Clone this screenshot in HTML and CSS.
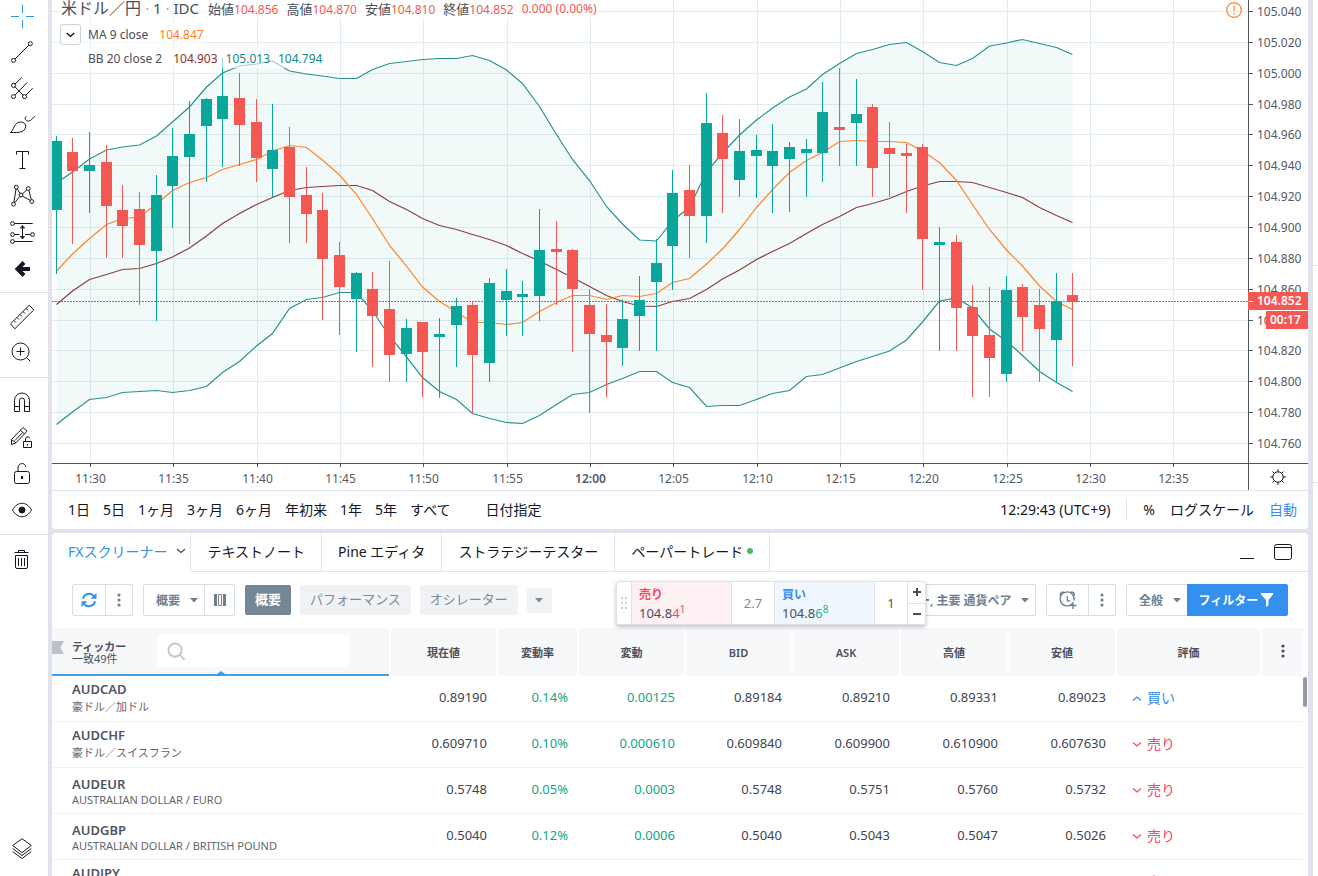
FILE: index.html
```
<!DOCTYPE html>
<html lang="ja">
<head>
<meta charset="utf-8">
<title>米ドル／円 チャート</title>
<link rel="stylesheet" href="styles.css">
</head>
<body>
<div class="app">
  <nav class="tools" aria-label="描画ツール">
    <button class="tool tool-active" aria-label="十字カーソル"><svg viewBox="0 0 28 28"><path d="M14.5 3v8M14.5 18v8M3 14.5h8M18 14.5h8"/></svg></button>
    <button class="tool" aria-label="トレンドライン"><svg viewBox="0 0 28 28"><circle cx="22.3" cy="5.7" r="2"/><circle cx="5.5" cy="22.4" r="2"/><path d="M7 21 20.8 7.2"/></svg></button>
    <button class="tool" aria-label="ピッチフォーク"><svg viewBox="0 0 28 28"><circle cx="5.5" cy="11.4" r="2"/><circle cx="5.5" cy="22.6" r="2"/><circle cx="16.5" cy="22.6" r="2"/><path d="M7 10l7-6.7M7 21.1 19.3 8.3M18 21.1l6.7-7M7 12.9l8 8.2"/></svg></button>
    <button class="tool" aria-label="ブラシ"><svg viewBox="0 0 28 28"><path d="M2.4 22.5C6 20 5.500 14.500 10.200 12.400c3.200-1 6.500 0 7.400 2.500.8 3-.8 5.200-3.600 6.600-3.500 1.500-7.500 1-11.600 1zM18.300 6.400c-2.300 1.800-.8 5 2 4.700C23.500 10.900 24.500 8 27 6.300"/></svg></button>
    <button class="tool" aria-label="テキスト"><svg viewBox="0 0 28 28"><path d="M8.500 8.500v-3h12v3M14.500 5.500v17M11.500 22.500h6"/></svg></button>
    <button class="tool" aria-label="パターン"><svg viewBox="0 0 28 28"><circle cx="5.500" cy="22.200" r="1.900"/><circle cx="8.300" cy="5.200" r="1.900"/><circle cx="13" cy="13" r="1.900"/><circle cx="20.300" cy="6.500" r="1.900"/><circle cx="23.800" cy="19.500" r="1.900"/><path d="M5.900 20.300 8 7.100M9.300 6.900l2.600 4.500M14.500 11.800l4.400-4M20.900 8.400l2.400 9.200M6.800 20.700l5-6.200M14.500 14.200l7.800 4.200"/></svg></button>
    <button class="tool" aria-label="予測"><svg viewBox="0 0 28 28"><circle cx="4.500" cy="5.500" r="1.900"/><circle cx="4.500" cy="16.500" r="1.900"/><circle cx="24.500" cy="16.500" r="1.900"/><circle cx="4.500" cy="23.500" r="1.900"/><path d="M6.500 5.500h18.200M6.500 16.500h5M17 16.500h5.500M6.500 23.500h18.200M14.500 8v12.500M12.500 10l2-2.500 2 2.500zM12.500 18.500l2 2.500 2-2.500z"/></svg></button>
    <button class="tool" aria-label="矢印"><svg class="heavy" viewBox="0 0 28 28"><path d="M16 8.500 9.500 15 16 21.500M10 15h12"/></svg></button>
    <hr class="tool-sep">
    <button class="tool" aria-label="ものさし"><svg viewBox="0 0 28 28"><path d="M2.500 20.800 21.300 2.200l4.500 4.700L6.800 25.800zM6 17.500l2 2M9 14.500l2 2M12 11.500l2 2M15 8.500l2 2M18 5.500l2 2"/></svg></button>
    <button class="tool" aria-label="ズームイン"><svg viewBox="0 0 28 28"><circle cx="12.500" cy="12.500" r="8.500"/><path d="M12.500 8.500v8M8.500 12.500h8M18.500 18.500l3.800 3.800"/></svg></button>
    <hr class="tool-sep">
    <button class="tool" aria-label="マグネット"><svg viewBox="0 0 28 28"><path d="M6.500 23.500v-11a7.500 7.500 0 0 1 15 0v11h-5v-11a2.500 2.500 0 0 0-5 0v11zM6.500 18.500h5M16.500 18.500h5"/></svg></button>
    <button class="tool" aria-label="描画モードを維持"><svg viewBox="0 0 28 28"><path d="M3.500 20.500v-5L15 3.500l4 3.700L8 18.800l-4.500 1.700M3.500 15.500l4.500 3.300M12.300 6.200l4.200 3.800M7 16.500l7.500-8M15.500 17.500h8v6h-8zM17.500 17.500v-2.700a2.200 2.200 0 0 1 4.300-.5M19.500 20v1.500"/></svg></button>
    <button class="tool" aria-label="ロック"><svg viewBox="0 0 28 28"><rect x="6.500" y="11.500" width="15" height="12" rx="2"/><path d="M10 11.500V8c0-5.500 7.200-6 7.800-1"/><path d="M14 16v3" stroke-width="2"/></svg></button>
    <button class="tool" aria-label="表示切替"><svg viewBox="0 0 28 28"><path d="M4.500 14c5-9 14-9 19 0-5 9-14 9-19 0z"/><circle cx="14" cy="14" r="3" fill="currentColor"/></svg></button>
    <hr class="tool-sep">
    <button class="tool" aria-label="削除"><svg viewBox="0 0 28 28"><path d="M6.500 7.500h14M10.500 7V5.500h6V7M7.500 10.500h12V22a1.500 1.500 0 0 1-1.500 1.500H9A1.500 1.500 0 0 1 7.500 22zM10.500 13v8M13.500 13v8M16.500 13v8"/></svg></button>
    <button class="tool tool-last" aria-label="オブジェクトツリー"><svg viewBox="0 0 28 28"><path d="M14 3.700 23.300 10.500 14 17.700 4.700 10.500zM4.700 13.500l9.300 7 9.300-7M4.700 16.500l9.300 7 9.300-7"/></svg></button>
  </nav>

  <main class="center">
    <section class="card chart-card" aria-label="チャート">
      <div class="chart">
        <div class="plot">
          <svg id="plot" class="plot-svg" aria-hidden="true"></svg>
          <div class="legend">
            <div class="legend-main">
              <h1 class="symbol">米ドル／円 <span class="symbol-latin"><i>·</i> 1 <i>·</i> IDC</span></h1>
              <span class="ohlc">始値<b>104.856</b></span>
              <span class="ohlc">高値<b>104.870</b></span>
              <span class="ohlc">安値<b>104.810</b></span>
              <span class="ohlc">終値<b>104.852</b></span>
              <span class="ohlc"><b>0.000 (0.00%)</b></span>
            </div>
            <div class="study">
              <button class="collapse" aria-label="折りたたむ"><svg viewBox="0 0 20 20"><path d="M6 8.500l4 3.500 4-3.500"/></svg></button>
              <span class="study-name">MA 9 close</span><span class="study-value orange">104.847</span>
            </div>
            <div class="study">
              <span class="collapse-space"></span>
              <span class="study-name">BB 20 close 2</span><span class="study-value maroon">104.903</span><span class="study-value teal">105.013</span><span class="study-value teal">104.794</span>
            </div>
          </div>
          <svg class="notice" viewBox="0 0 18 18" aria-label="通知"><circle cx="9" cy="9" r="7.300"/><path d="M9 4.800v5.200M9 11.800v1.600"/></svg>
        </div>
        <div class="price-axis">
          <svg id="prices" class="axis-svg"></svg>
          <span class="price-tag">104.852</span>
          <span class="countdown">00:17</span>
        </div>
        <div class="time-axis"><svg id="times" class="axis-svg"></svg></div>
        <button class="axis-settings" aria-label="スケール設定"><svg viewBox="0 0 18 18"><circle cx="9" cy="9" r="5.200"/><path d="M9 1.200v2.600M9 14.200v2.600M1.200 9h2.600M14.200 9h2.600M3.500 3.500l1.800 1.800M12.700 12.700l1.800 1.800M14.500 3.500l-1.800 1.800M5.300 12.700l-1.800 1.800"/></svg></button>
      </div>
      <div class="ranges">
        <button>1日</button><button>5日</button><button>1ヶ月</button><button>3ヶ月</button><button>6ヶ月</button><button>年初来</button><button>1年</button><button>5年</button><button>すべて</button>
        <button class="goto">日付指定</button>
        <button class="clock">12:29:43 (UTC+9)</button>
        <button class="percent">%</button><button class="scale">ログスケール</button><button class="scale blue">自動</button>
      </div>
    </section>

    <section class="card panel" aria-label="FXスクリーナー">
      <div class="tabs">
        <button class="tab tab-on">FXスクリーナー<svg class="tab-chevron" viewBox="0 0 10 6"><path d="M1 1l4 3.500L9 1"/></svg></button>
        <button class="tab">テキストノート</button>
        <button class="tab">Pine エディタ</button>
        <button class="tab">ストラテジーテスター</button>
        <button class="tab">ペーパートレード<span class="dot"></span></button>
        <div class="tabs-end">
          <button class="window-btn" aria-label="最小化"><svg viewBox="0 0 20 18"><path d="M3 15.500h14"/></svg></button>
          <button class="window-btn" aria-label="最大化"><svg viewBox="0 0 20 18"><rect x="1.500" y="1.500" width="17" height="15" rx="2"/><path d="M1.500 4.500h17"/></svg></button>
        </div>
      </div>

      <div class="filters">
        <div class="group">
          <button class="g-btn refresh" aria-label="更新"><svg viewBox="0 0 16 16"><path d="M2 6.700A6.200 6.200 0 0 1 13 4.200M14 9.300A6.200 6.200 0 0 1 3 11.800"/><path class="solid" d="M15.500 1v5.800H9.700zM.500 15V9.200h5.800z"/></svg></button>
          <button class="g-btn kebab" aria-label="メニュー"><svg viewBox="0 0 4 14"><circle cx="2" cy="2" r="1.600"/><circle cx="2" cy="7" r="1.600"/><circle cx="2" cy="12" r="1.600"/></svg></button>
        </div>
        <div class="group">
          <div class="pick pick-view"><select aria-label="列の組"><option>概要</option></select><svg class="caret" viewBox="0 0 8 5"><path d="M0 0h8L4 4.500z"/></svg></div>
          <button class="g-btn columns" aria-label="列"><svg viewBox="0 0 12 14"><path d="M0 1h3v12H0zM9 1h3v12H9z"/><path class="open" d="M4.500 1.500h3v11h-3z"/></svg></button>
        </div>
        <button class="chip chip-on">概要</button>
        <button class="chip">パフォーマンス</button>
        <button class="chip">オシレーター</button>
        <button class="chip chip-small" aria-label="その他"><svg class="caret" viewBox="0 0 8 5"><path d="M0 0h8L4 4.500z"/></svg></button>
        <div class="group push">
          <div class="pick pick-pairs"><select aria-label="通貨ペア"><option>ー, 主要 通貨ペア</option></select><svg class="caret" viewBox="0 0 8 5"><path d="M0 0h8L4 4.500z"/></svg></div>
        </div>
        <div class="group">
          <button class="g-btn alarm" aria-label="アラート作成"><svg viewBox="0 0 20 20"><path d="M14.500 13.500A7 7 0 1 1 16 10.500M9.300 6v4.800h3M2 5.500C2 3.500 3.500 2 5.500 2M13 2c2 0 3.500 1.500 3.500 3.500M15 12v7M11.500 15.500h7"/></svg></button>
          <button class="g-btn kebab" aria-label="メニュー"><svg viewBox="0 0 4 14"><circle cx="2" cy="2" r="1.600"/><circle cx="2" cy="7" r="1.600"/><circle cx="2" cy="12" r="1.600"/></svg></button>
        </div>
        <div class="group">
          <div class="pick pick-all"><select aria-label="範囲"><option>全般</option></select><svg class="caret" viewBox="0 0 8 5"><path d="M0 0h8L4 4.500z"/></svg></div>
          <button class="filter-btn">フィルター<svg viewBox="0 0 12 14"><path d="M0 0h12v1.500L7.500 7v5L5 14V7L0 1.500z"/></svg></button>
        </div>
      </div>

      <div class="trade">
        <span class="grip"><svg viewBox="0 0 6 12"><path d="M0 0h2v2H0zM4 0h2v2H4zM0 5h2v2H0zM4 5h2v2H4zM0 10h2v2H0zM4 10h2v2H4z"/></svg></span>
        <button class="side sell"><strong>売り</strong><span>104.8<em>4<sup>1</sup></em></span></button>
        <span class="spread">2.7</span>
        <button class="side buy"><strong>買い</strong><span>104.8<em>6<sup>8</sup></em></span></button>
        <input class="qty" value="1" aria-label="数量">
        <span class="steps"><button aria-label="増やす"><svg viewBox="0 0 10 10"><path d="M1 5h8M5 1v8"/></svg></button><button aria-label="減らす"><svg viewBox="0 0 10 10"><path d="M1 5h8"/></svg></button></span>
      </div>

      <div class="screener">
        <table>
          <colgroup><col><col class="w107"><col class="w81"><col class="w107"><col class="w107"><col class="w108"><col class="w108"><col class="w108"><col class="w145"><col class="w41"></colgroup>
          <thead>
            <tr>
              <th class="ticker-head"><div class="ticker-box"><svg class="flag" viewBox="0 0 12 13"><path d="M0 0h12L8.500 6.500 12 13H0z"/></svg><span class="ticker-label">ティッカー<small>一致49件</small></span><label class="search"><svg viewBox="0 0 20 20"><circle cx="8.500" cy="8.500" r="7"/><path d="M13.500 13.500l5 5"/></svg><input type="text" aria-label="ティッカー検索"></label></div></th>
              <th>現在値</th><th>変動率</th><th>変動</th><th>BID</th><th>ASK</th><th>高値</th><th>安値</th><th>評価</th>
              <th><button class="kebab head-kebab" aria-label="列の設定"><svg viewBox="0 0 4 14"><circle cx="2" cy="2" r="1.600"/><circle cx="2" cy="7" r="1.600"/><circle cx="2" cy="12" r="1.600"/></svg></button></th>
            </tr>
          </thead>
          <tbody>
            <tr><td class="pair"><a href="#audcad">AUDCAD</a><span class="jp">豪ドル／加ドル</span></td><td>0.89190</td><td class="up">0.14%</td><td class="up">0.00125</td><td>0.89184</td><td>0.89210</td><td>0.89331</td><td>0.89023</td><td class="rating buying"><svg viewBox="0 0 10 5"><path d="M1 4.500 5 1l4 3.500"/></svg>買い</td><td></td></tr>
            <tr><td class="pair"><a href="#audchf">AUDCHF</a><span class="jp">豪ドル／スイスフラン</span></td><td>0.609710</td><td class="up">0.10%</td><td class="up">0.000610</td><td>0.609840</td><td>0.609900</td><td>0.610900</td><td>0.607630</td><td class="rating selling"><svg viewBox="0 0 10 5"><path d="M1 .500 5 4 9 .500"/></svg>売り</td><td></td></tr>
            <tr><td class="pair pair-en"><a href="#audeur">AUDEUR</a><span>AUSTRALIAN DOLLAR / EURO</span></td><td>0.5748</td><td class="up">0.05%</td><td class="up">0.0003</td><td>0.5748</td><td>0.5751</td><td>0.5760</td><td>0.5732</td><td class="rating selling"><svg viewBox="0 0 10 5"><path d="M1 .500 5 4 9 .500"/></svg>売り</td><td></td></tr>
            <tr><td class="pair pair-en"><a href="#audgbp">AUDGBP</a><span>AUSTRALIAN DOLLAR / BRITISH POUND</span></td><td>0.5040</td><td class="up">0.12%</td><td class="up">0.0006</td><td>0.5040</td><td>0.5043</td><td>0.5047</td><td>0.5026</td><td class="rating selling"><svg viewBox="0 0 10 5"><path d="M1 .500 5 4 9 .500"/></svg>売り</td><td></td></tr>
            <tr><td class="pair"><a href="#audjpy">AUDJPY</a><span class="jp">豪ドル／円</span></td><td></td><td></td><td></td><td></td><td></td><td></td><td></td><td class="rating selling"><svg viewBox="0 0 10 5"><path d="M1 .500 5 4 9 .500"/></svg>売り</td><td></td></tr>
          </tbody>
        </table>
        <div class="scroll"><span></span></div>
      </div>
    </section>
  </main>

  <aside class="side-strip"><div class="strip-a"></div><div class="strip-b"></div><div class="strip-c"></div></aside>
</div>
<script src="chart.js"></script>
</body>
</html>
```
FILE: chart.js
```
// Minute bars from 11:28 to 12:29: [high, body top, body bottom, low, rising]
const bars = [
  [136,141,210,274,1],[138,152,171,244,0],[132,165,171,213,1],[145,162,206,258,0],[185,210,226,258,0],
  [192,209,245,305,0],[175,195,251,321,1],[128,156,186,228,1],[101,134,157,244,1],[98,99,126,182,1],
  [58,96,119,167,1],[73,98,125,166,0],[99,122,158,182,0],[104,150,169,197,1],[127,147,197,243,0],
  [167,195,214,243,0],[193,210,259,320,0],[242,255,287,335,0],[272,273,299,352,1],[272,289,316,367,0],
  [261,309,355,382,0],[319,328,354,382,1],[322,322,352,397,0],[318,334,337,398,1],[298,306,325,367,1],
  [301,305,355,413,0],[278,283,363,382,1],[269,291,300,336,1],[281,294,297,336,1],[209,250,296,321,1],
  [221,249,252,305,0],[249,250,289,352,0],[289,305,334,413,0],[304,335,342,397,0],[299,319,348,366,1],
  [276,300,316,351,1],[239,263,282,351,1],[170,193,246,290,1],[165,190,216,258,0],[93,123,216,243,1],
  [115,133,159,213,0],[119,151,180,197,1],[135,150,156,198,1],[124,151,166,213,1],[142,147,159,212,1],
  [139,149,153,197,1],[82,112,153,182,1],[68,127,130,166,0],[79,114,123,166,1],[104,107,168,197,0],
  [122,148,154,197,0],[144,153,156,213,0],[144,147,239,290,0],[227,242,245,351,1],[235,242,308,351,0],
  [285,307,336,397,0],[287,335,358,397,0],[276,290,374,382,1],[284,287,317,351,0],[289,305,329,382,0],
  [273,301,340,382,1],[273,295,302,366,0]
];
const upper = [183,172,159,150,147,145,136,122,107,87,73,66,64,61,71,74,76,78.5,78.5,69.5,63.5,61.5,59.5,58.5,58.5,55.5,60.5,70,83.5,106.5,134.5,159.5,180.5,206.5,224,240,241,221,207,172,153,135,120,108,97,89,74.5,63.5,53.5,49.5,44.5,42.5,51.5,62.5,65.5,58.5,46,43,39.5,43.5,47.5,54.5];
const lower = [424.5,412,399.5,397.5,392.5,391.5,390.5,392.5,390.5,386.5,372.5,361.5,346,333.5,308.5,299.5,297.5,292.5,292.5,311,336,357,377.5,391.5,399.5,413.5,418.5,422.5,423.5,415.5,404.5,394.5,392.5,384.5,378.5,371.5,371.5,382.5,387.5,406.5,405.5,405.5,399.5,393.5,390.5,376.5,374.5,368,361.5,356.5,351,340,322,301,298,308,329,341,355.5,371.5,382.5,391.5];
const middle = [304.5,291,279.5,274.5,269.5,268.5,263.5,257,248,236,223.5,213.5,204.5,197.5,190.5,187.5,186.5,185.5,185.5,190.5,201.5,209.5,218.5,225.5,229.5,234.5,239.5,245.5,253.5,261,269.5,277.5,286.5,295.5,301.5,306,306.5,301.5,298.5,289.5,279,270,259.5,251.5,243.5,233.5,224.5,216.5,207.5,203.5,198.5,191.5,186,181.5,181.5,182.5,187.5,192.5,197.5,207.5,215.5,222.5];
const average = [271,254,238.5,224.5,218.5,217,204,190.5,182.5,177.5,169.5,164.5,159.5,151,145.5,147.5,160,175,194.5,218.5,245.5,266,287,301.5,312,322.5,322.5,324.5,322.5,311.5,302.5,295.5,295.5,299.5,295.5,296.5,293.5,282.5,278.5,264,249,229.5,207.5,189.5,172.5,160.5,152.5,141.5,140.5,141.5,141.5,142.5,151,162.5,180.5,204.5,229.5,250,266,286,301.5,309.5];

const minute = 50 / 3;
const barX = i => Math.floor(4.2 + i * minute);
const gridX = i => Math.floor(38.4 + i * 5 * minute) + 0.5;
const gridY = i => Math.round(11 + i * 30.86) + 0.5;
const points = (list) => list.map((y, i) => `${barX(i) + 0.5},${y}`);
const labels = ['11:30','11:35','11:40','11:45','11:50','11:55','12:00','12:05','12:10','12:15','12:20','12:25','12:30','12:35'];

let out = '';
for (let i = 0; i < 15; i++) out += `<line class="grid" x1="0" x2="100%" y1="${gridY(i)}" y2="${gridY(i)}"/>`;
for (let i = 0; i < 14; i++) out += `<line class="grid" x1="${gridX(i)}" x2="${gridX(i)}" y1="0" y2="100%"/>`;
out += `<polygon class="band" points="${points(upper).concat(points(lower).reverse()).join(' ')}"/>`;
out += `<polyline class="line-teal" points="${points(upper).join(' ')}"/>`;
out += `<polyline class="line-teal" points="${points(lower).join(' ')}"/>`;
out += `<polyline class="line-maroon" points="${points(middle).join(' ')}"/>`;
out += `<polyline class="line-orange" points="${points(average).join(' ')}"/>`;
bars.forEach(([high, top, bottom, low, rising], i) => {
  const x = barX(i);
  out += `<g class="${rising ? 'rise' : 'fall'}"><rect x="${x}" y="${high}" width="1" height="${low - high}"/><rect x="${x - 5}" y="${top}" width="11" height="${bottom - top}"/></g>`;
});
out += '<line class="last-price" x1="0" x2="100%" y1="301.5" y2="301.5"/>';
document.getElementById('plot').innerHTML = out;

out = '';
for (let i = 0; i < 15; i++) {
  const y = gridY(i);
  out += `<line class="tick" x1="0" x2="4" y1="${y}" y2="${y}"/><text x="8" y="${y + 4.5}">${(105.04 - i * 0.02).toFixed(3)}</text>`;
}
document.getElementById('prices').innerHTML = out;

out = '';
labels.forEach((label, i) => {
  out += `<line class="tick" x1="${gridX(i)}" x2="${gridX(i)}" y1="0" y2="3"/><text class="mid${label === '12:00' ? ' hour' : ''}" x="${gridX(i)}" y="19">${label}</text>`;
});
document.getElementById('times').innerHTML = out;
```
FILE: styles.css
```
* { box-sizing: border-box; }
body { margin: 0; font-family: "Noto Sans", "Noto Sans CJK JP", sans-serif; font-size: 12px; color: #4a4e59; }
button, input, select { font: inherit; color: inherit; border: 0; background: none; padding: 0; margin: 0; }
svg { display: block; fill: none; stroke: currentColor; }

.app { display: flex; height: 100vh; overflow: hidden; background: #e0e3eb; }

.tools { flex: none; width: 48px; display: flex; flex-direction: column; overflow: hidden; background: #fff; color: #131722; padding-bottom: 9px; }
.tool { flex: none; width: 44px; height: 36px; display: grid; place-items: center; }
.tool:first-child { margin-top: -2px; }
.tool svg { width: 28px; height: 28px; }
.tool .heavy { stroke-width: 4; }
.tool-active { color: #2196f3; }
.tool-sep { flex: none; width: 100%; height: 1px; border: 0; background: #e0e3eb; margin: 6px 0; }
.tool-last { margin-top: auto; }

.center { flex: 1; min-width: 0; display: flex; flex-direction: column; gap: 4px; margin: 0 5px 0 4px; }
.card { background: #fff; }
.chart-card { flex: none; border-radius: 0 0 4px 4px; }
.chart { display: grid; grid-template-columns: 1fr 60px; grid-template-rows: 463px 27px; }
.plot { position: relative; overflow: hidden; }
.plot-svg, .axis-svg { width: 100%; height: 100%; }
.grid { stroke: #e1ecf2; }
.band { fill: rgb(0 128 128 / 5%); stroke: none; }
.line-teal { stroke: #28918f; stroke-width: 1.2; }
.line-maroon { stroke: #8a3f43; stroke-width: 1.2; }
.line-orange { stroke: #ff8428; stroke-width: 1.2; }
.rise { fill: #08a69b; stroke: none; }
.fall { fill: #f55753; stroke: none; }
.last-price { stroke: #f04a48; stroke-dasharray: 2 1; }
.price-axis { position: relative; border-left: 1px solid #50535e; }
.time-axis { border-top: 1px solid #50535e; }
.tick { stroke: #50535e; }
.axis-svg text { fill: #555963; stroke: none; font-size: 12px; }
.axis-svg .mid { text-anchor: middle; }
.axis-svg .hour { font-weight: 600; }
.price-tag, .countdown { position: absolute; right: 0; height: 18px; line-height: 18px; background: #f55753; color: #fff; font-weight: 600; }
.price-tag { top: 292px; left: -1px; padding-left: 9px; }
.price-tag::before { content: ""; position: absolute; left: 1px; top: 9px; width: 4px; height: 1px; background: #fff; }
.countdown { top: 311px; width: 42px; padding-left: 4px; }
.axis-settings { border-top: 1px solid #50535e; border-left: 1px solid #50535e; padding-right: 2px; display: grid; place-items: center; color: #131722; }
.axis-settings svg { width: 18px; height: 18px; }

.legend { position: absolute; left: 8px; top: -4px; display: grid; gap: 4px; justify-items: start; }
.legend > div { display: flex; align-items: center; background: rgb(255 255 255 / 60%); }
.legend-main { height: 24px; gap: 8px; }
.symbol { margin: 0 1px; font-size: 16px; font-weight: 400; line-height: 22px; white-space: nowrap; }
.symbol-latin { font-size: 15px; }
.symbol i { font-style: normal; color: #a3a6af; }
.ohlc { font-size: 13px; white-space: nowrap; }
.ohlc b { font-weight: 400; font-size: 12px; color: #f55753; }
.study { height: 20px; }
.collapse { width: 21px; height: 21px; border: 1px solid #ccd0da; border-radius: 3px; background: #fff; color: #131722; }
.collapse svg { width: 19px; height: 19px; stroke-width: 1.5; }
.collapse-space { width: 21px; }
.study-name { margin-left: 7px; margin-right: 3px; }
.study-value { margin-left: 8px; }
.orange { color: #ff7f22; }
.maroon { color: #8a3036; }
.teal { color: #158683; }
.notice { position: absolute; right: 5px; top: 1px; width: 18px; height: 18px; color: #ff9850; stroke-width: 1.5; }

.ranges { height: 39px; padding: 0 4px 0 10px; display: flex; align-items: center; border-top: 1px solid #e0e3eb; font-size: 14px; color: #131722; white-space: nowrap; }
.ranges button { padding: 0 7px 0 6px; line-height: 22px; }
.ranges .goto { margin-left: 22px; }
.ranges .clock { margin-left: auto; padding-right: 16px; border-right: 1px solid #e0e3eb; }
.ranges .percent { margin-left: 10px; }
.ranges .scale { padding: 0 7px 0 8px; }
.blue { color: #3390f0; }

.panel { flex: 1; min-height: 0; position: relative; display: flex; flex-direction: column; border-radius: 4px 4px 0 0; overflow: hidden; }
.tabs { flex: none; height: 39px; display: flex; font-size: 14px; color: #131722; white-space: nowrap; }
.tab { flex: none; padding: 0 16px 2px; border-right: 1px solid #e0e3eb; border-bottom: 1px solid #e0e3eb; display: flex; align-items: center; }
.tab-on { border-bottom-color: transparent; color: #3390f0; padding-right: 4px; }
.tab-chevron { width: 10px; height: 6px; margin-left: 9px; color: #434651; stroke-width: 1.2; }
.dot { width: 6px; height: 6px; border-radius: 3px; background: #4fb866; margin-left: 4px; }
.tabs-end { flex: 1; border-bottom: 1px solid #e0e3eb; display: flex; align-items: center; justify-content: flex-end; gap: 16px; padding-right: 15px; }
.window-btn svg { width: 20px; height: 18px; }

.filters { flex: none; height: 56px; padding: 0 20px; display: flex; align-items: center; gap: 10px; color: #6e7f8f; }
.group { display: flex; height: 32px; border: 1px solid #d9dde2; border-radius: 2px; }
.g-btn { display: grid; place-items: center; }
.g-btn + .g-btn, .pick + .g-btn { border-left: 1px solid #d9dde2; }
.refresh { width: 32px; color: #3390f0; }
.refresh svg { width: 16px; height: 16px; stroke-width: 2; }
.refresh .solid { fill: currentColor; stroke: none; }
.kebab svg { width: 4px; height: 14px; fill: currentColor; stroke: none; }
.g-btn.kebab { width: 27px; }
.pick { position: relative; display: flex; align-items: center; font-size: 12px; font-weight: 600; }
.pick select { appearance: none; width: 100%; height: 100%; line-height: 32px; }
.caret { width: 8px; height: 5px; fill: currentColor; stroke: none; }
.pick .caret { position: absolute; right: 6px; top: 13px; pointer-events: none; }
.pick-view, .pick-all { width: 60px; }
.pick-view select, .pick-all select { padding-left: 12px; }
.pick-pairs { width: 135px; }
.pick-pairs select { padding-left: 18px; }
.columns { width: 30px; }
.columns svg { width: 12px; height: 14px; fill: currentColor; stroke: none; }
.columns .open { fill: none; stroke: currentColor; }
.chip { height: 30px; padding: 0 10px 3px; font-size: 13px; background: #f0f2f5; color: #7c8b99; border-radius: 2px; white-space: nowrap; }
.chip + .chip { margin-left: -1px; }
.chip-on { background: #758696; color: #fff; font-weight: 600; }
.chip-small { width: 25px; height: 25px; padding: 0; display: grid; place-items: center; }
.push { margin-left: auto; }
.alarm { width: 41px; }
.alarm svg { width: 20px; height: 20px; stroke-width: 1.3; }
.filter-btn { width: 101px; height: 32px; margin: -1px -1px -1px 0; background: #3390f0; color: #fff; font-size: 12px; font-weight: 700; display: flex; align-items: center; justify-content: center; gap: 3px; padding-right: 3px; border-radius: 0 2px 2px 0; }
.filter-btn svg { width: 12px; height: 14px; fill: currentColor; stroke: none; }

.trade { position: absolute; left: 564px; top: 48px; height: 44px; display: flex; background: #fff; border: 1px solid #e0e3eb; border-radius: 3px; box-shadow: 0 2px 4px rgb(0 0 0 / 25%); overflow: hidden; }
.grip { width: 14px; display: grid; place-items: center; color: #c9ccd4; }
.grip svg { width: 6px; height: 12px; fill: currentColor; stroke: none; }
.side { width: 101px; padding: 3px 7px 1px; text-align: left; display: grid; grid-template-rows: 19px 18px; align-items: center; border-left: 1px solid #e0e3eb; border-right: 1px solid #e0e3eb; font-size: 13px; }
.side strong { font-size: 12px; font-weight: 600; line-height: 18px; }
.side span { line-height: 18px; }
.side em { font-style: normal; }
.side sup { font-size: 10px; line-height: 0; }
.sell { background: #fdf0f2; }
.sell strong, .sell em { color: #fb4564; }
.buy { background: #f0f6fd; }
.buy strong { color: #3390f0; }
.buy em { color: #22ae95; }
.spread { width: 42px; line-height: 42px; text-align: center; font-size: 13px; color: #878a93; }
.qty { width: 32px; text-align: center; font-size: 13px; color: #6b4a3c; }
.steps { width: 18px; display: grid; border-left: 1px solid #e0e3eb; }
.steps button { display: grid; place-items: center; }
.steps button + button { border-top: 1px solid #e0e3eb; }
.steps svg { width: 10px; height: 10px; stroke-width: 2; }

.screener { flex: 1; min-height: 0; display: flex; overflow: hidden; }
table { flex: 1; min-width: 0; table-layout: fixed; border-collapse: separate; border-spacing: 0; align-self: flex-start; }
.w41 { width: 41px; } .w81 { width: 81px; } .w107 { width: 107px; } .w108 { width: 108px; } .w145 { width: 145px; }
th { height: 48px; padding: 0; background: #f7f8fa; background-clip: padding-box; border-right: 2px solid #fff; font-size: 11px; font-weight: 600; }
th:last-child { border-right: 0; }
.ticker-box { position: relative; height: 48px; display: flex; align-items: center; border-bottom: 2px solid #419ee8; text-align: left; }
.ticker-box::after { content: ""; position: absolute; left: 165px; bottom: 0; border: 4px solid transparent; border-top: 0; border-bottom: 3px solid #419ee8; }
.flag { width: 12px; height: 13px; margin-bottom: 8px; fill: #bcc0ca; stroke: none; }
.ticker-label { width: 93px; padding: 3px 0 0 8px; line-height: 12px; }
.ticker-label small { display: block; font-size: 11px; font-weight: 400; }
.search { flex: none; width: 193px; height: 32px; padding-left: 10px; display: flex; align-items: center; background: #fff; }
.search svg { flex: none; width: 19px; height: 19px; color: #c4c6ca; stroke-width: 2; }
.search input { width: 150px; padding-left: 8px; outline: 0; }
.head-kebab { height: 14px; }
td { height: 46px; padding: 0 11px 3px 0; border-bottom: 1px solid #edf0f5; text-align: right; font-size: 13px; color: #42454e; }
.up { color: #0fa685; }
td.pair { text-align: left; padding: 0 0 0 20px; white-space: nowrap; }
.pair a { display: block; color: #4f5561; text-decoration: none; font-size: 13px; font-weight: 600; line-height: 16px; }
.pair span { display: block; color: #5f6670; font-size: 11px; line-height: 16px; }
.pair .jp { line-height: 19px; }
td.pair-en { padding-top: 3px; }
td.rating { text-align: left; padding: 0 0 4px 15px; font-size: 14px; }
.rating svg { display: inline-block; width: 10px; height: 5px; margin-right: 5px; vertical-align: middle; stroke-width: 1.2; }
td.buying { color: #3390f0; }
td.selling { color: #fb4564; }
.scroll { flex: none; width: 5px; padding-top: 49px; }
.scroll span { display: block; width: 4px; height: 30px; border-radius: 2px; background: #9599a5; }

.side-strip { flex: none; width: 5px; display: grid; grid-template-rows: 265px 217px 1fr; background: #fff; }
.strip-b, .strip-c { border-top: 1px solid #e0e3eb; }
```
